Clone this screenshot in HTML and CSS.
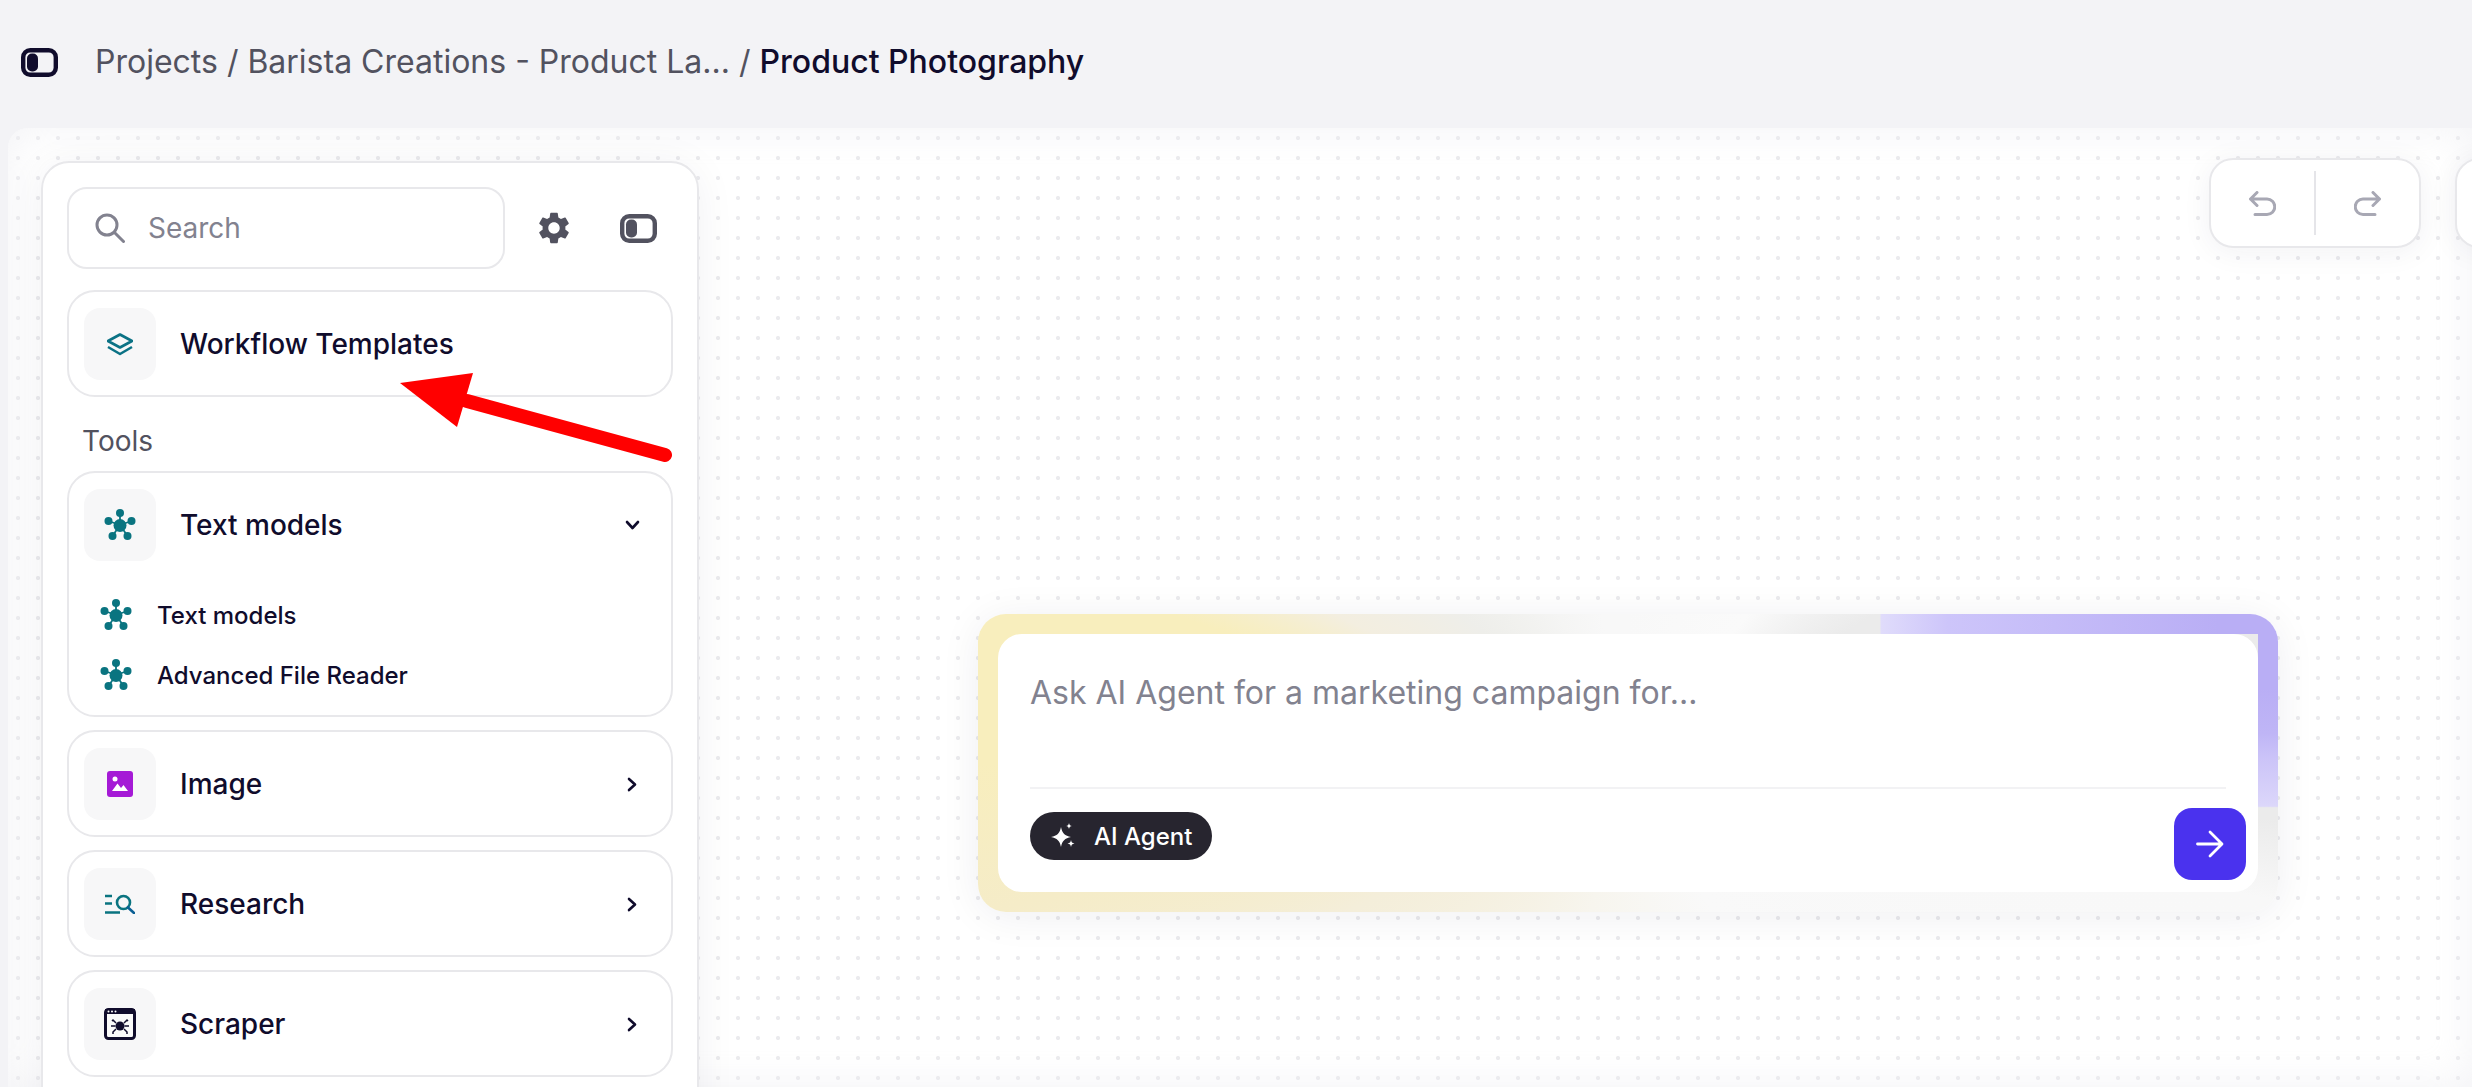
FILE: index.html
```html
<!DOCTYPE html>
<html lang="en">
<head>
    <title>Product Photography</title>
    <link rel="stylesheet" href="styles.css">
</head>
<body>
    <svg class="icon-defs" width="0" height="0">
        <symbol id="network" viewBox="0 0 32 32">
            <g stroke="#0a7480" stroke-width="1.8">
                <path d="M16 16V4M16 16L4.500 12M16 16L27.500 12M16 16L8.500 27M16 16L23.500 27"/>
            </g>
            <g fill="#0a7480">
                <circle cx="16" cy="16.500" r="6.500"/>
                <circle cx="16" cy="4" r="4"/>
                <circle cx="4.500" cy="12" r="4"/>
                <circle cx="27.500" cy="12" r="4"/>
                <circle cx="8.500" cy="27" r="4"/>
                <circle cx="23.500" cy="27" r="4"/>
            </g>
        </symbol>
        <symbol id="toggle" viewBox="0 0 37 29">
            <rect x="2.2" y="2.2" width="32.6" height="24.6" rx="7" fill="none" stroke="currentColor" stroke-width="4.4"/>
            <rect x="6" y="5.500" width="11" height="18" rx="5" fill="currentColor"/>
        </symbol>
        <symbol id="chevron-right" viewBox="0 0 10 15">
            <path d="M2 2l6 5.500-6 5.500" fill="none" stroke="#100c2c" stroke-width="2.600" stroke-linecap="round" stroke-linejoin="round"/>
        </symbol>
    </svg>

    <header class="topbar">
        <svg class="toggle-icon" width="37" height="29"><use href="#toggle"/></svg>
        <div class="crumbs">Projects / Barista Creations - Product La... / <strong>Product Photography</strong></div>
    </header>

    <main class="canvas">
        <aside class="panel">
            <div class="search-row">
                <label class="search">
                    <svg width="30" height="30" viewBox="0 0 30 30">
                        <circle cx="12" cy="12" r="10" fill="none" stroke="#82828f" stroke-width="3"/>
                        <path d="M19.500 19.500L28.500 28.500" stroke="#82828f" stroke-width="3" stroke-linecap="round"/>
                    </svg>
                    <input type="text" placeholder="Search">
                </label>
                <svg class="gear" width="38" height="38" viewBox="0 0 24 24">
                    <path fill="#52525f" d="M19.140 12.940c.04-.3.06-.61.06-.94 0-.32-.02-.64-.07-.94l2.030-1.580a.49.49 0 0 0 .12-.61l-1.920-3.320a.488.488 0 0 0-.59-.22l-2.390.96c-.5-.38-1.030-.7-1.620-.94l-.36-2.540a.484.484 0 0 0-.48-.41h-3.840c-.24 0-.43.17-.47.41l-.36 2.540c-.59.24-1.130.57-1.620.94l-2.390-.96c-.22-.08-.47 0-.59.22L2.740 8.870c-.12.21-.08.47.12.61l2.030 1.580c-.05.3-.09.63-.09.94s.02.64.07.94l-2.030 1.580a.49.49 0 0 0-.12.61l1.920 3.320c.12.22.37.29.59.22l2.390-.96c.5.38 1.030.7 1.620.94l.36 2.540c.05.24.24.41.48.41h3.840c.24 0 .44-.17.47-.41l.36-2.540c.59-.24 1.130-.56 1.620-.94l2.390.96c.22.08.47 0 .59-.22l1.920-3.320c.12-.22.07-.47-.12-.61l-2.010-1.580zM12 15.600c-1.980 0-3.600-1.620-3.600-3.600s1.620-3.600 3.600-3.600 3.600 1.620 3.600 3.600-1.620 3.600-3.600 3.600z"/>
                </svg>
                <svg class="toggle-small" width="37" height="29"><use href="#toggle"/></svg>
            </div>

            <div class="tool-card templates">
                <div class="tool-head">
                    <span class="tile">
                        <svg width="26" height="23" viewBox="0 0 26 23">
                            <path d="M13 1.500L25 8 13 14.500 1 8z" fill="none" stroke="#0b7285" stroke-width="2.600" stroke-linejoin="round"/>
                            <path d="M1 14l12 7 12-7" fill="none" stroke="#0b7285" stroke-width="2.600" stroke-linejoin="round"/>
                        </svg>
                    </span>
                    <span class="tool-name">Workflow Templates</span>
                </div>
            </div>

            <div class="section-label">Tools</div>

            <div class="tool-list">
                <div class="tool-card">
                    <div class="tool-head">
                        <span class="tile"><svg width="32" height="32"><use href="#network"/></svg></span>
                        <span class="tool-name">Text models</span>
                        <svg class="chevron-down" width="15" height="10" viewBox="0 0 15 10">
                            <path d="M2 2l5.500 6L13 2" fill="none" stroke="#100c2c" stroke-width="2.600" stroke-linecap="round" stroke-linejoin="round"/>
                        </svg>
                    </div>
                    <ul class="sub-tools">
                        <li><svg width="32" height="32"><use href="#network"/></svg>Text models</li>
                        <li><svg width="32" height="32"><use href="#network"/></svg>Advanced File Reader</li>
                    </ul>
                </div>

                <div class="tool-card">
                    <div class="tool-head">
                        <span class="tile">
                            <svg width="26" height="26" viewBox="0 0 26 26">
                                <rect width="26" height="26" rx="3" fill="#a51ad6"/>
                                <circle cx="8" cy="8" r="2.500" fill="#fff"/>
                                <path d="M5 20l5.500-7.500L14 17l2.500-3 4.500 6z" fill="#fff"/>
                            </svg>
                        </span>
                        <span class="tool-name">Image</span>
                        <svg class="chevron-right" width="10" height="15"><use href="#chevron-right"/></svg>
                    </div>
                </div>

                <div class="tool-card">
                    <div class="tool-head">
                        <span class="tile">
                            <svg width="30" height="20" viewBox="0 0 30 20">
                                <path d="M0 2h7M0 9.500h7M0 18.500h15" fill="none" stroke="#0a7480" stroke-width="2.600"/>
                                <circle cx="18.500" cy="8.500" r="6.500" fill="none" stroke="#0a7480" stroke-width="2.600"/>
                                <path d="M23 13.500l6 5.500" stroke="#0b5f94" stroke-width="2.600" stroke-linecap="round"/>
                            </svg>
                        </span>
                        <span class="tool-name">Research</span>
                        <svg class="chevron-right" width="10" height="15"><use href="#chevron-right"/></svg>
                    </div>
                </div>

                <div class="tool-card">
                    <div class="tool-head">
                        <span class="tile">
                            <svg width="32" height="32" viewBox="0 0 32 32">
                                <rect x="1.500" y="1.500" width="29" height="29" rx="3" fill="#fafafa" stroke="#100c2c" stroke-width="3"/>
                                <rect x="1" y="1" width="30" height="5" fill="#100c2c"/>
                                <g fill="#fff">
                                    <circle cx="4.500" cy="3.500" r="1"/>
                                    <circle cx="8" cy="3.500" r="1"/>
                                    <circle cx="11.500" cy="3.500" r="1"/>
                                </g>
                                <circle cx="16" cy="18" r="4.500" fill="#100c2c"/>
                                <path d="M12 15l-3-3-1 1M20 15l3-3 1 1M11.500 18H7M20.500 18H25M12 21l-3 3v2M20 21l3 3v2" fill="none" stroke="#100c2c" stroke-width="1.500"/>
                            </svg>
                        </span>
                        <span class="tool-name">Scraper</span>
                        <svg class="chevron-right" width="10" height="15"><use href="#chevron-right"/></svg>
                    </div>
                </div>
            </div>
        </aside>

        <div class="history-group">
            <button class="history-btn">
                <svg width="27" height="25" viewBox="0 0 27 25">
                    <path d="M8 1.500L1.500 8 8 14.500M1.500 8H18a7.500 7.500 0 0 1 0 15.500H6" fill="none" stroke="#a8a8b4" stroke-width="3" stroke-linecap="round" stroke-linejoin="round"/>
                </svg>
            </button>
            <span class="history-sep"></span>
            <button class="history-btn">
                <svg width="27" height="25" viewBox="0 0 27 25">
                    <path transform="matrix(-1 0 0 1 27 0)" d="M8 1.500L1.500 8 8 14.500M1.500 8H18a7.500 7.500 0 0 1 0 15.500H6" fill="none" stroke="#a8a8b4" stroke-width="3" stroke-linecap="round" stroke-linejoin="round"/>
                </svg>
            </button>
        </div>
        <div class="zoom-group"></div>

        <div class="prompt">
            <div class="prompt-inner">
                <div class="prompt-text">Ask AI Agent for a marketing campaign for...</div>
                <div class="prompt-line"></div>
                <div class="prompt-foot">
                    <span class="agent-pill">
                        <svg width="25" height="28" viewBox="0 0 25 28">
                            <path fill="#fff" d="M11 5C12 11 15 14 21 15 15 16 12 19 11 25 10 19 7 16 1 15 7 14 10 11 11 5Z"/>
                            <path fill="#fff" d="M19 1C19.400 3 20 3.600 22 4 20 4.400 19.400 5 19 7 18.600 5 18 4.400 16 4 18 3.600 18.600 3 19 1Z"/>
                            <path fill="#fff" d="M21 18C21.500 20.500 22 21 24.500 21.500 22 22 21.500 22.500 21 25 20.500 22.500 20 22 17.500 21.500 20 21 20.500 20.500 21 18Z"/>
                        </svg>
                        AI Agent
                    </span>
                    <button class="send-btn">
                        <svg width="28" height="28" viewBox="0 0 28 28">
                            <path d="M1.500 14h24M14 2l12 12-12 12" fill="none" stroke="#fff" stroke-width="2.800" stroke-linecap="round" stroke-linejoin="round"/>
                        </svg>
                    </button>
                </div>
            </div>
        </div>

        <svg class="arrow" width="300" height="100" viewBox="0 0 300 100">
            <path d="M268 84L70 30" fill="none" stroke="#ff0000" stroke-width="14" stroke-linecap="round"/>
            <path d="M3 12L76 2 60 56z" fill="#ff0000"/>
        </svg>
    </main>
</body>
</html>
```

FILE: styles.css
```css
* {
    box-sizing: border-box;
}
html, body {
    height: 100%;
}
body {
    margin: 0;
    overflow: hidden;
    background: #f3f3f6;
    color: #100c2c;
    font-family: 'Inter', sans-serif;
    display: flex;
    flex-direction: column;
}
button {
    border: none;
    padding: 0;
    background: none;
    font: inherit;
}
.icon-defs {
    position: absolute;
}
.topbar {
    height: 128px;
    flex-shrink: 0;
    display: flex;
    align-items: center;
    gap: 37px;
    padding: 0 0 6px 21px;
}
.toggle-icon {
    color: #100c2c;
    margin-top: 3px;
}
.crumbs {
    font-size: 32px;
    color: #52525f;
}
.crumbs strong {
    font-weight: 500;
    color: #100c2c;
}
.canvas {
    flex: 1;
    margin-left: 8px;
    position: relative;
    overflow: hidden;
    border-radius: 20px 0 0 0;
    background-color: #fff;
    background-image: radial-gradient(circle at 10px 10px, #ebebee 1.8px, transparent 2.4px);
    background-size: 20px 20px;
    box-shadow: inset 0 0 40px rgba(240, 240, 244, 0.8);
}

/* left tools panel */
.panel {
    position: absolute;
    left: 33px;
    top: 33px;
    width: 658px;
    padding: 24px 24px 60px;
    background: #fff;
    border: 2px solid #e8e8eb;
    border-radius: 28px;
    box-shadow: 0 4px 40px rgba(30, 30, 60, 0.06);
}
.search-row {
    display: flex;
    align-items: center;
    margin-bottom: 21px;
}
.search {
    width: 438px;
    height: 82px;
    display: flex;
    align-items: center;
    gap: 23px;
    padding-left: 26px;
    border: 2px solid #e8e8eb;
    border-radius: 20px;
}
.search input {
    width: 200px;
    border: none;
    outline: none;
    padding: 0;
    font-family: inherit;
    font-size: 28px;
}
.search input::placeholder {
    color: #82828f;
    opacity: 1;
}
.gear {
    margin-left: 30px;
}
.toggle-small {
    margin-left: 47px;
    color: #52525f;
}
.tool-card {
    border: 2px solid #e8e8eb;
    border-radius: 28px;
    padding: 16px 15px 15px;
}
.tool-head {
    display: flex;
    align-items: center;
    gap: 24px;
}
.tile {
    width: 72px;
    height: 72px;
    flex-shrink: 0;
    display: flex;
    align-items: center;
    justify-content: center;
    border-radius: 16px;
    background: #f7f7f8;
}
.tile svg {
    display: block;
}
.tool-name {
    flex: 1;
    font-size: 28px;
    font-weight: 500;
}
.chevron-down {
    margin-right: 16px;
}
.chevron-right {
    margin-right: 19px;
}
.section-label {
    margin: 27px 0 13px 15px;
    font-size: 28px;
    line-height: 34px;
    color: #52525f;
}
.tool-list {
    display: flex;
    flex-direction: column;
    gap: 13px;
}
.sub-tools {
    list-style: none;
    margin: 38px 0 0;
    padding: 0 0 9px 16px;
    display: flex;
    flex-direction: column;
    gap: 28px;
}
.sub-tools li {
    height: 32px;
    display: flex;
    align-items: center;
    gap: 25px;
    font-size: 24px;
    font-weight: 500;
}

/* undo / redo */
.history-group {
    position: absolute;
    left: 2201px;
    top: 30px;
    width: 212px;
    height: 90px;
    display: flex;
    align-items: center;
    background: #fff;
    border: 2px solid #e8e8eb;
    border-radius: 24px;
    box-shadow: 0 4px 30px rgba(30, 30, 60, 0.06);
}
.history-btn {
    flex: 1;
    display: flex;
    justify-content: center;
}
.history-sep {
    width: 2px;
    height: 64px;
    background: #e5e5e9;
}
.zoom-group {
    position: absolute;
    left: 2447px;
    top: 30px;
    width: 200px;
    height: 90px;
    background: #fff;
    border: 2px solid #e8e8eb;
    border-radius: 24px;
    box-shadow: 0 4px 30px rgba(30, 30, 60, 0.06);
}

/* prompt box: purple top and right edges sit over a yellow to grey sweep */
.prompt {
    position: absolute;
    left: 970px;
    top: 486px;
    width: 1300px;
    height: 298px;
    padding: 20px;
    border-radius: 28px;
    background:
        linear-gradient(90deg, transparent 902px, #e0dcfb 903px, #cdc5fa 970px, #b9aef5 1240px) top / 100% 20px no-repeat,
        linear-gradient(180deg, #b9aef5 25%, #bfb5f6 40%, #cbc3f8 48%, #dcd7fa 64.500%, transparent 65%) right / 20px 100% no-repeat,
        conic-gradient(from 0deg at 50% 50%,
            #f8f8f8 0deg, #fafafa 39deg, #ebebeb 59deg, #ebebeb 95deg, #f8f8f8 102deg,
            #f9f9f9 150deg, #f7f5ee 194deg, #f4eeda 242deg, #f5ecc8 257deg,
            #f8eebd 270deg, #f8eebd 288deg, #f3eee0 297deg, #eeeeea 312deg, #f5f5f4 335deg, #f8f8f8 350deg);
    box-shadow: 0 4px 40px rgba(30, 30, 60, 0.07);
}
.prompt-inner {
    height: 100%;
    padding: 0 12px 12px 32px;
    background: #fff;
    border-radius: 24px;
    display: flex;
    flex-direction: column;
}
.prompt-text {
    height: 153px;
    padding-top: 39px;
    font-size: 32px;
    line-height: 40px;
    color: #82828f;
}
.prompt-line {
    height: 2px;
    margin-right: 20px;
    background: #f2f2f4;
}
.prompt-foot {
    flex: 1;
    display: flex;
    justify-content: space-between;
    align-items: flex-end;
}
.agent-pill {
    height: 48px;
    margin-bottom: 20px;
    display: flex;
    align-items: center;
    gap: 19px;
    padding: 0 20px;
    border-radius: 24px;
    background: #27252f;
    color: #fff;
    font-size: 24px;
    font-weight: 500;
}
.send-btn {
    width: 72px;
    height: 72px;
    display: flex;
    align-items: center;
    justify-content: center;
    border-radius: 18px;
    background: #4a32ee;
}

/* annotation on top of the screenshot */
.arrow {
    position: absolute;
    left: 389px;
    top: 243px;
}
```
